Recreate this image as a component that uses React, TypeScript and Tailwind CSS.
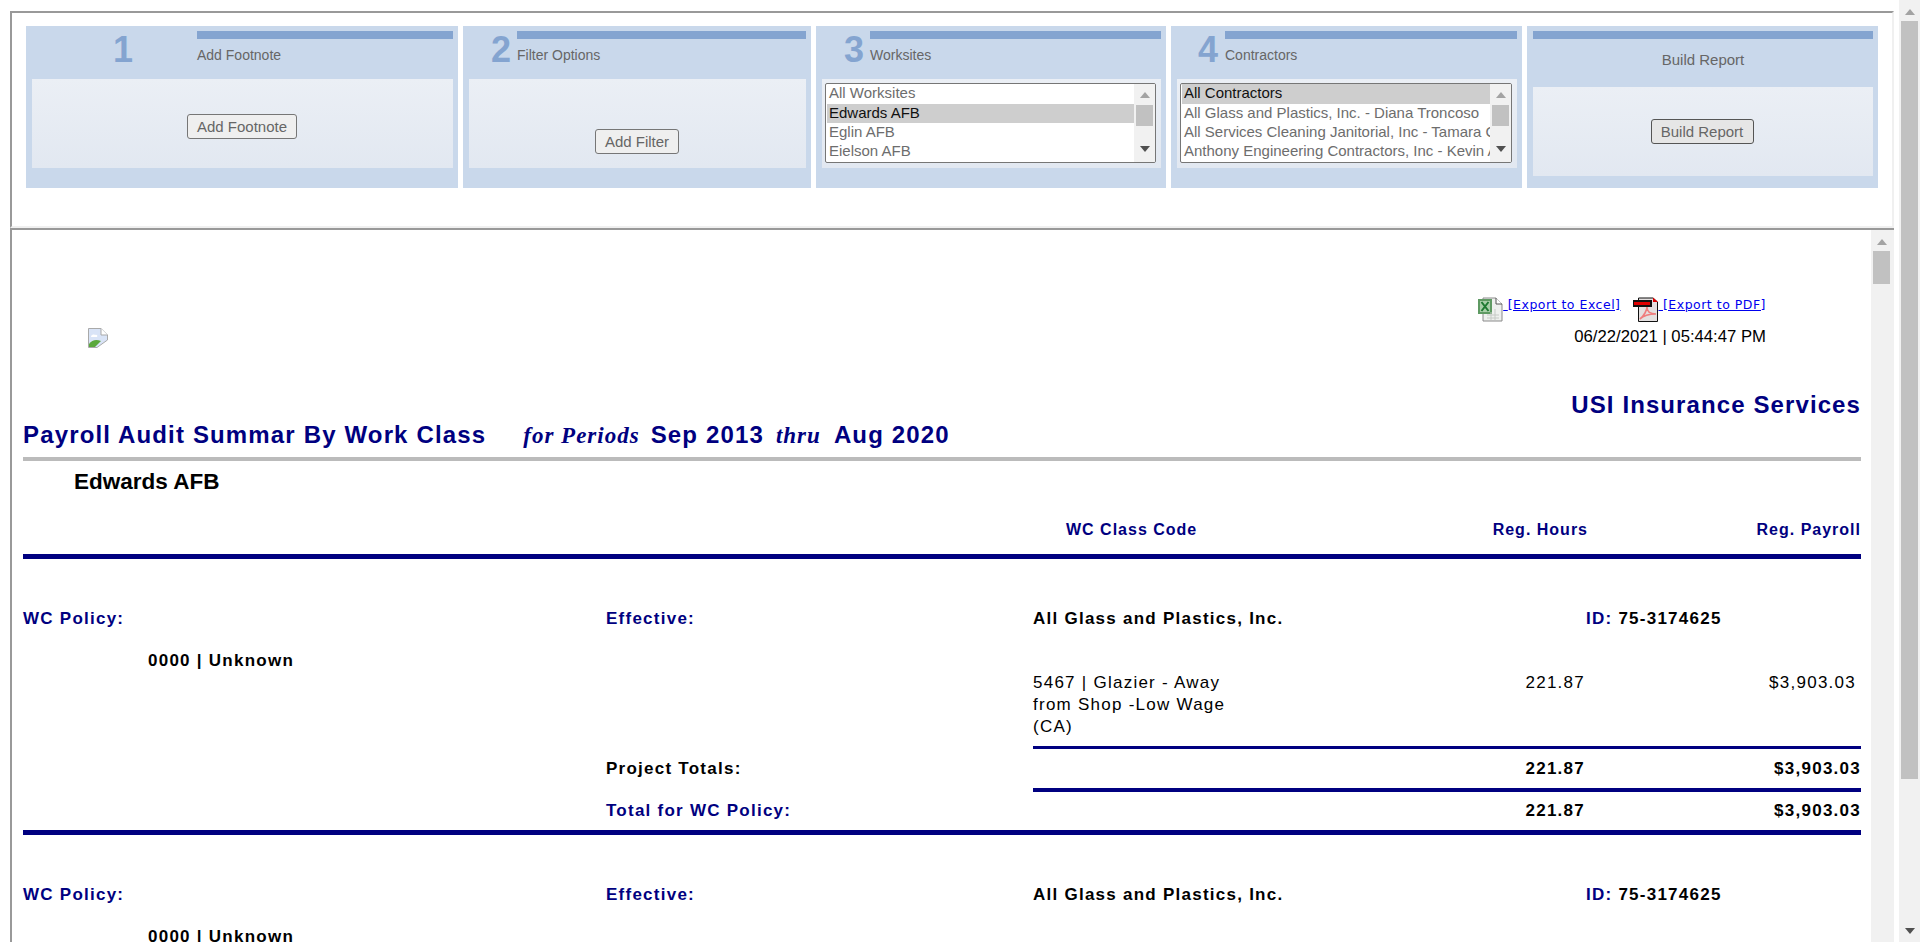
import type { ReactNode } from 'react'

const WORKSITES = ['All Worksites', 'Edwards AFB', 'Eglin AFB', 'Eielson AFB']
const CONTRACTORS = [
  'All Contractors',
  'All Glass and Plastics, Inc. - Diana Troncoso',
  'All Services Cleaning Janitorial, Inc - Tamara Gonzalez',
  'Anthony Engineering Contractors, Inc - Kevin Anthony',
]

function Arrow({ down, className }: { down?: boolean; className: string }) {
  return (
    <svg width="10" height="6" viewBox="0 0 10 6" className={className}>
      <path d={down ? 'M0 0H10L5 6Z' : 'M5 0L10 6H0Z'} fill="currentColor" />
    </svg>
  )
}

function ListBox({ items, selected, width }: { items: string[]; selected: number; width: string }) {
  return (
    <div className={`${width} h-[80px] flex bg-white border border-[#767676] rounded-[2px] overflow-hidden`}>
      <div className="flex-1 min-w-0 pl-px">
        {items.map((item, i) => (
          <div
            key={item}
            className={`${i === 0 ? 'h-[20px]' : 'h-[19px]'} pl-[2px] leading-[18px] whitespace-nowrap overflow-hidden ${i === selected ? 'bg-[#cecece] text-[#111]' : 'text-[#6d6d6d]'}`}
          >
            {item}
          </div>
        ))}
      </div>
      <div className="w-[21px] bg-[#f1f1f1] flex flex-col items-center pt-[8px]">
        <Arrow className="text-[#a3a3a3] w-[10px]" />
        <div className="w-[17px] h-[21px] bg-[#c1c1c1] mt-[7px]" />
        <Arrow down className="text-[#505050] w-[10px] mt-[20px]" />
      </div>
    </div>
  )
}

function Button({ children, className }: { children: ReactNode; className: string }) {
  return (
    <button className={`h-[25px] border rounded-[3px] text-[15px] leading-[22px] text-[#666] ${className}`}>
      {children}
    </button>
  )
}

function StepHeader({ num, label, numClass }: { num: string; label: string; numClass: string }) {
  return (
    <div className="flex h-[53px]">
      <div className={`${numClass} shrink-0 pt-[4px] text-[36px] leading-[40px] font-bold text-[#84a4d0]`}>{num}</div>
      <div className="flex-1 pt-[5px] pr-[5px]">
        <div className="h-[8px] bg-[#84a4d0]" />
        <div className="mt-[5px] leading-[22px] text-[14px] text-[#666]">{label}</div>
      </div>
    </div>
  )
}

function Body({ children, className }: { children: ReactNode; className: string }) {
  return <div className={`ml-[6px] mr-[5px] h-[89px] bg-linear-to-b from-[#ebeff5] to-[#e2e8f1] ${className}`}>{children}</div>
}

function ExcelIcon() {
  return (
    <svg width="25" height="25" viewBox="0 0 25 25" className="shrink-0">
      <path d="M5 1H18L24 7V24H5Z" fill="#eef0ee" stroke="#8a8a8a" />
      <path d="M18 1V7H24" fill="#fff" stroke="#555" />
      <rect x="0" y="2" width="14" height="15" fill="#5f9a63" />
      <rect x="2" y="4" width="10" height="11" fill="#a9cfa9" />
      <path d="M3.5 5L10.5 14M10.5 5L3.5 14" stroke="#1f7a32" strokeWidth="2" />
      <path d="M9 18H21M9 21H21M13 15V23M17 12V23" stroke="#c6cac6" />
    </svg>
  )
}

function PdfIcon() {
  return (
    <svg width="25" height="25" viewBox="0 0 25 25" className="shrink-0">
      <path d="M5.5 1H20L24.5 5V24.5H5.5Z" fill="#e4e0e0" stroke="#111" />
      <path d="M20 0.5L25 5H20Z" fill="#d00" />
      <rect x="0" y="3" width="19" height="7" fill="#111" />
      <rect x="1" y="5" width="16" height="3" fill="#e00000" />
      <path d="M7 22C11 19 14 13 14 10C14 15 17 17 23 17C17 17 11 18 7 22Z" fill="none" stroke="#ef7d7d" strokeWidth="1.6" />
    </svg>
  )
}

function BrokenImage() {
  return (
    <svg width="20" height="20" viewBox="0 0 20 20" className="block">
      <path d="M0.5 0.5H13L19.5 7V12L9 19.5H0.5Z" fill="#d9e4f7" stroke="#a9a9a9" />
      <path d="M13 0.5V7H19.5" fill="#fff" stroke="#a9a9a9" />
      <path d="M3 9C3 7 5 6 7 7C9 6 10 8 9 9Z" fill="#fff" />
      <path d="M1 19V16C4 12 8 11 13 13L7 19Z" fill="#5aa83c" />
    </svg>
  )
}

function ExportLink({ label }: { label: string }) {
  return (
    <a href="#" className="flex items-center text-[#0000ee]">
      <span className="underline font-['DejaVu_Sans',sans-serif] text-[12.5px] tracking-[0.5px] leading-[16px] -mt-[10px]">{'\u00a0'}{label}</span>
    </a>
  )
}

function WcSection() {
  return (
    <div className="pt-[44px]">
      <div className="grid grid-cols-[583px_427px_553px_275px] h-[32px] items-center font-bold tracking-[1.25px] text-[17px]">
        <div className="text-[#000080]">WC Policy:</div>
        <div className="text-[#000080]">Effective:</div>
        <div>All Glass and Plastics, Inc.</div>
        <div><span className="text-[#000080]">ID:</span> 75-3174625</div>
      </div>
      <div className="grid grid-cols-[583px_427px_553px_275px] mt-[15px] h-[96px] tracking-[1.25px] text-[17px] leading-[22px]">
        <div className="pl-[125px] font-bold">0000 | Unknown</div>
        <div />
        <div className="pt-[22px] flex justify-between">
          <div className="w-[200px]">5467 | Glazier - Away from Shop -Low Wage (CA)</div>
          <div className="pr-[1px]">221.87</div>
        </div>
        <div className="pt-[22px] pr-[5px] text-right">$3,903.03</div>
      </div>
      <div className="ml-[1010px] h-[3px] bg-[#000080]" />
      <div className="grid grid-cols-[583px_427px_553px_275px] h-[39px] items-center font-bold tracking-[1.25px] text-[17px]">
        <div />
        <div>Project Totals:</div>
        <div className="text-right pr-[1px]">221.87</div>
        <div className="text-right">$3,903.03</div>
      </div>
      <div className="ml-[1010px] h-[4px] bg-[#000080]" />
      <div className="grid grid-cols-[583px_427px_553px_275px] h-[38px] items-center font-bold tracking-[1.25px] text-[17px]">
        <div />
        <div className="text-[#000080]">Total for WC Policy:</div>
        <div className="text-right pr-[1px]">221.87</div>
        <div className="text-right">$3,903.03</div>
      </div>
      <div className="h-[5px] bg-[#000080]" />
    </div>
  )
}

export default function App() {
  return (
    <div className="h-[942px] flex overflow-hidden bg-white text-black text-[15px] font-['Liberation_Sans',Arial,sans-serif]">
      <div className="w-[1899px] pt-[11px] pl-[10px] pr-[5px] flex flex-col min-h-0">
        {/* Top frame: filter panels */}
        <div className="h-[217px] shrink-0 border-t-2 border-t-[#999] border-l-2 border-l-[#999] border-r-2 border-r-[#f0f0f0] border-b-2 border-b-[#f0f0f0] pt-[13px] pl-[14px]">
          <div className="flex gap-[5px] h-[162px]">
            <div className="w-[432px] bg-[#c9d8eb]">
              <StepHeader num="1" label="Add Footnote" numClass="w-[171px] pl-[87px]" />
              <Body className="flex justify-center pt-[35px] pr-[1px]">
                <Button className="w-[110px] bg-[#efefef] border-[#767676]">Add Footnote</Button>
              </Body>
            </div>
            <div className="w-[348px] bg-[#c9d8eb]">
              <StepHeader num="2" label="Filter Options" numClass="w-[54px] pl-[28px]" />
              <Body className="flex justify-center pt-[50px] pr-[1px]">
                <Button className="w-[84px] bg-[#efefef] border-[#767676]">Add Filter</Button>
              </Body>
            </div>
            <div className="w-[350px] bg-[#c9d8eb]">
              <StepHeader num="3" label="Worksites" numClass="w-[54px] pl-[28px]" />
              <Body className="pt-[4px] pl-[3px]">
                <ListBox items={WORKSITES} selected={1} width="w-[331px]" />
              </Body>
            </div>
            <div className="w-[351px] bg-[#c9d8eb]">
              <StepHeader num="4" label="Contractors" numClass="w-[54px] pl-[27px]" />
              <Body className="pt-[4px] pl-[3px]">
                <ListBox items={CONTRACTORS} selected={0} width="w-[332px]" />
              </Body>
            </div>
            <div className="w-[351px] bg-[#c9d8eb]">
              <div className="h-[61px] pt-[5px] pl-[6px] pr-[5px]">
                <div className="h-[8px] bg-[#84a4d0]" />
                <div className="mt-[10px] text-center text-[15px] leading-[22px] text-[#666]">Build Report</div>
              </div>
              <Body className="flex justify-center pt-[32px] pr-[2px]">
                <Button className="w-[103px] bg-[#e6e6e6] border-[#555]">Build Report</Button>
              </Body>
            </div>
          </div>
        </div>

        {/* Report frame */}
        <div className="flex-1 min-h-0 flex border-t-2 border-t-[#999] border-l-2 border-l-[#999] overflow-hidden">
          <div className="w-[1859px] pl-[11px] pr-[10px] overflow-hidden">
            <div className="h-[127px] pt-[67px] flex justify-between">
              <div className="pl-[65px] pt-[31px]"><BrokenImage /></div>
              <div className="pr-[95px]">
                <div className="flex h-[25px]">
                  <ExcelIcon />
                  <ExportLink label="[Export to Excel]" />
                  <div className="w-[13px]" />
                  <PdfIcon />
                  <ExportLink label="[Export to PDF]" />
                </div>
                <div className="mt-[5px] text-right text-[16.7px] leading-[20px]">06/22/2021 | 05:44:47 PM</div>
              </div>
            </div>
            <div className="h-[100px] pt-[36px]">
              <div className="text-right h-[24px] leading-[24px] text-[24px] font-bold tracking-[1.1px] text-[#000080]">USI Insurance Services</div>
              <div className="h-[34px] flex items-baseline text-[#000080] font-bold text-[24px] tracking-[1.15px] leading-[36px]">
                <span>Payroll Audit Summar By Work Class</span>
                <span className="ml-[37px] font-['Liberation_Serif',serif] italic text-[23px] tracking-[1px]">for Periods</span>
                <span className="ml-[11px]">Sep 2013</span>
                <span className="ml-[12px] font-['Liberation_Serif',serif] italic text-[23px] tracking-[1px]">thru</span>
                <span className="ml-[13px]">Aug 2020</span>
              </div>
            </div>
            <div className="h-[4px] bg-[#bbb]" />
            <div className="h-[40px] pl-[51px] pt-[2px] flex items-center text-[22.5px] font-bold">Edwards AFB</div>
            <div className="grid grid-cols-[1010px_554px_274px] h-[53px] pt-[4px] items-center text-[16px] font-bold tracking-[1px] text-[#000080]">
              <div />
              <div className="flex justify-between"><span className="pl-[33px]">WC Class Code</span><span className="-mr-[1px]">Reg. Hours</span></div>
              <div className="text-right">Reg. Payroll</div>
            </div>
            <div className="h-[5px] bg-[#000080]" />
            <WcSection />
            <WcSection />
          </div>
          <div className="w-[23px] bg-[#f1f1f1] pt-[9px] flex flex-col items-center pr-[2px]">
            <Arrow className="text-[#a3a3a3]" />
            <div className="mt-[6px] w-[17px] h-[33px] bg-[#c1c1c1]" />
          </div>
        </div>
      </div>

      {/* Page scrollbar */}
      <div className="w-[21px] bg-[#f1f1f1] flex flex-col items-center pt-[9px]">
        <Arrow className="text-[#a3a3a3]" />
        <div className="mt-[6px] w-[17px] h-[758px] bg-[#c1c1c1]" />
        <Arrow down className="text-[#505050] mt-[149px]" />
      </div>
    </div>
  )
}
